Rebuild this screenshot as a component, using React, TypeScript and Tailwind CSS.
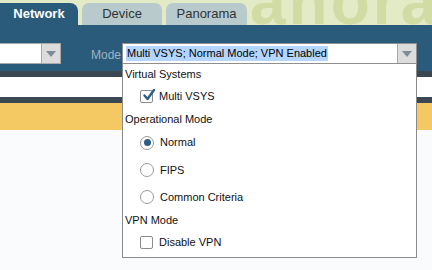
const font = { fontFamily: '"Liberation Sans", Arial, sans-serif' };

function Checkbox({ checked }: { checked: boolean }) {
  return (
    <span className="relative flex h-[13px] w-[13px] items-center justify-center rounded-[2px] border border-[#8c8c8c] bg-white">
      {checked && (
        <svg viewBox="0 0 14 14" className="absolute left-[1px] top-[-3px] h-[14px] w-[14px]">
          <path d="M2.5 7.5 L5.5 11 L12 2" fill="none" stroke="#2d5f86" strokeWidth="2.4" strokeLinecap="round" strokeLinejoin="round" />
        </svg>
      )}
    </span>
  );
}

function Radio({ checked }: { checked: boolean }) {
  return (
    <span className="flex h-[14px] w-[14px] items-center justify-center rounded-full border border-[#9a9a9a] bg-white">
      {checked && <span className="h-[7px] w-[7px] rounded-full bg-[#2d5f86]" />}
    </span>
  );
}

function Option({ children, label }: { children: React.ReactNode; label: string }) {
  return (
    <div className="flex items-center gap-[6px] pl-[15px]">
      {children}
      <span>{label}</span>
    </div>
  );
}

function Arrow() {
  return (
    <div className="flex h-full w-[19px] items-center justify-center border-l border-[#a9a9a9] bg-[#dcdcdc]">
      <svg viewBox="0 0 10 6" className="h-[6px] w-[10px]">
        <path d="M0 0 H10 L5 6 Z" fill="#7d8c96" />
      </svg>
    </div>
  );
}

export default function App() {
  return (
    <div className="relative h-[270px] w-[432px] overflow-hidden bg-[#fafbfd]" style={font}>
      {/* tab strip */}
      <div className="relative flex h-[25px] items-end gap-[4px] overflow-hidden bg-[#e2eac6]">
        <div className="absolute left-[250px] top-[-30px] whitespace-nowrap text-[64px] font-bold leading-none tracking-[3px] text-[#d0dca3]">
          anoram
        </div>
        <div className="relative flex h-[22px] w-[78px] items-center justify-center rounded-tr-[8px] bg-[#2b5b7b] text-[13px] font-bold text-white">
          Network
        </div>
        <div className="relative flex h-[22px] w-[80px] items-center justify-center rounded-t-[7px] bg-[#b9cacd] text-[13px] text-[#2e3436]">
          Device
        </div>
        <div className="relative flex h-[22px] w-[81px] items-center justify-center rounded-t-[7px] bg-[#b9cacd] text-[13px] text-[#2e3436]">
          Panorama
        </div>
      </div>

      {/* toolbar */}
      <div className="flex h-[46px] items-start bg-[#2b5b7b] pt-[18px]">
        <div className="flex h-[21px] w-[61px] border border-l-0 border-[#a9a9a9] bg-white">
          <div className="flex-1" />
          <Arrow />
        </div>
        <span className="ml-[30px] mt-[3px] w-[31px] text-[12px] text-[#9db3c4]">Mode</span>
        <div className="flex h-[21px] w-[295px] border border-[#8f8f8f] bg-white">
          <div className="flex flex-1 items-center pl-[3px]">
            <span className="bg-[#b4d5fe] px-[1px] text-[11px] leading-[15px] text-black">
              Multi VSYS; Normal Mode; VPN Enabled
            </span>
          </div>
          <Arrow />
        </div>
      </div>
      <div className="h-[6px] bg-[#3b4852]" />
      <div className="h-[20px] bg-white" />
      <div className="h-[6px] bg-[#3b4852]" />
      <div className="h-[27px] bg-[#f4c862]" />

      {/* dropdown list */}
      <div className="absolute left-[122px] top-[64px] flex h-[194px] w-[295px] flex-col border border-t-0 border-[#8a8a8a] bg-white pl-[2px] pt-[1px] text-[11px] text-[#111]">
        <div className="h-[19px] leading-[19px]">Virtual Systems</div>
        <div className="flex h-[25px] items-center">
          <Option label="Multi VSYS">
            <Checkbox checked />
          </Option>
        </div>
        <div className="h-[20px] leading-[20px]">Operational Mode</div>
        <div className="flex h-[27px] items-center">
          <Option label="Normal">
            <Radio checked />
          </Option>
        </div>
        <div className="flex h-[28px] items-center">
          <Option label="FIPS">
            <Radio checked={false} />
          </Option>
        </div>
        <div className="flex h-[26px] items-center">
          <Option label="Common Criteria">
            <Radio checked={false} />
          </Option>
        </div>
        <div className="h-[20px] leading-[20px]">VPN Mode</div>
        <div className="flex h-[24px] items-center">
          <Option label="Disable VPN">
            <Checkbox checked={false} />
          </Option>
        </div>
      </div>
    </div>
  );
}
